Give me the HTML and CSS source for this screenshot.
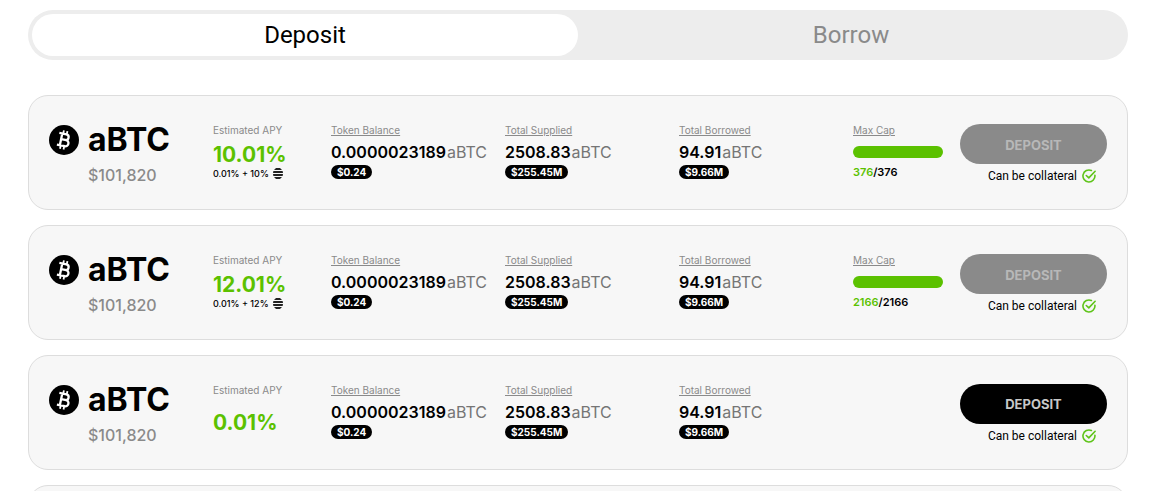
FILE: index.html
```
<!DOCTYPE html>
<html lang="en">
<head>
<meta charset="utf-8">
<title>Markets</title>
<link rel="stylesheet" href="styles.css">
</head>
<body>
<svg class="sprite" aria-hidden="true">
  <symbol id="btc" viewBox="0 0 30 30">
    <circle cx="15" cy="15" r="15" fill="#000"/>
    <g transform="rotate(12 15 15)" fill="none" stroke="#fff" stroke-width="2.3">
      <path d="M9 9.1h7.2a2.8 2.8 0 0 1 0 5.6h-4.4M16.2 14.7h.8a3.1 3.1 0 0 1 0 6.2H9M12 9.1v11.8"/>
      <path d="M12.9 5.6v3.4M16.5 5.6v3.4M12.9 21v3.4M16.5 21v3.4" stroke-width="1.8"/>
    </g>
  </symbol>
  <symbol id="globe" viewBox="0 0 10 11">
    <path d="M3 0h4l2 2H1z" fill="#222"/>
    <path d="M.4 3h9.2l.4 2H0z" fill="#222"/>
    <path d="M0 6h10l-.4 2H.4z" fill="#222"/>
    <path d="M1 9h8l-2 2H3z" fill="#222"/>
  </symbol>
  <symbol id="check" viewBox="0 0 14 14">
    <path d="M12.9 6.2A6 6 0 1 1 9.4 1.5M4.3 6.5l2.5 2.4 6.3-6.6" fill="none" stroke="#5fc41a" stroke-width="1.6" stroke-linecap="round" stroke-linejoin="round"/>
  </symbol>
</svg>
<main class="page">
  <div class="tabs" role="tablist">
    <button class="tab tab-active" role="tab" aria-selected="true">Deposit</button>
    <button class="tab" role="tab" aria-selected="false">Borrow</button>
  </div>
  <div class="markets">
    <article class="card">
      <div class="asset"><svg class="coin"><use href="#btc"/></svg><h2 class="name">aBTC</h2><p class="price">$101,820</p></div>
      <div class="cell"><span class="label plain">Estimated APY</span><strong class="apy">10.01%</strong><span class="split">0.01% + 10% <svg class="globe"><use href="#globe"/></svg></span></div>
      <div class="cell"><span class="label">Token Balance</span><p class="amount"><strong>0.0000023189</strong><span class="unit">aBTC</span></p><span class="pill">$0.24</span></div>
      <div class="cell"><span class="label">Total Supplied</span><p class="amount"><strong>2508.83</strong><span class="unit">aBTC</span></p><span class="pill">$255.45M</span></div>
      <div class="cell"><span class="label">Total Borrowed</span><p class="amount"><strong>94.91</strong><span class="unit">aBTC</span></p><span class="pill">$9.66M</span></div>
      <div class="cell"><span class="label">Max Cap</span><div class="bar"></div><p class="cap"><span class="used">376</span>/376</p></div>
      <div class="action"><button class="deposit" disabled>DEPOSIT</button><p class="collateral">Can be collateral <svg class="check"><use href="#check"/></svg></p></div>
    </article>
    <article class="card">
      <div class="asset"><svg class="coin"><use href="#btc"/></svg><h2 class="name">aBTC</h2><p class="price">$101,820</p></div>
      <div class="cell"><span class="label plain">Estimated APY</span><strong class="apy">12.01%</strong><span class="split">0.01% + 12% <svg class="globe"><use href="#globe"/></svg></span></div>
      <div class="cell"><span class="label">Token Balance</span><p class="amount"><strong>0.0000023189</strong><span class="unit">aBTC</span></p><span class="pill">$0.24</span></div>
      <div class="cell"><span class="label">Total Supplied</span><p class="amount"><strong>2508.83</strong><span class="unit">aBTC</span></p><span class="pill">$255.45M</span></div>
      <div class="cell"><span class="label">Total Borrowed</span><p class="amount"><strong>94.91</strong><span class="unit">aBTC</span></p><span class="pill">$9.66M</span></div>
      <div class="cell"><span class="label">Max Cap</span><div class="bar"></div><p class="cap"><span class="used">2166</span>/2166</p></div>
      <div class="action"><button class="deposit" disabled>DEPOSIT</button><p class="collateral">Can be collateral <svg class="check"><use href="#check"/></svg></p></div>
    </article>
    <article class="card">
      <div class="asset"><svg class="coin"><use href="#btc"/></svg><h2 class="name">aBTC</h2><p class="price">$101,820</p></div>
      <div class="cell"><span class="label plain">Estimated APY</span><strong class="apy apy-single">0.01%</strong></div>
      <div class="cell"><span class="label">Token Balance</span><p class="amount"><strong>0.0000023189</strong><span class="unit">aBTC</span></p><span class="pill">$0.24</span></div>
      <div class="cell"><span class="label">Total Supplied</span><p class="amount"><strong>2508.83</strong><span class="unit">aBTC</span></p><span class="pill">$255.45M</span></div>
      <div class="cell"><span class="label">Total Borrowed</span><p class="amount"><strong>94.91</strong><span class="unit">aBTC</span></p><span class="pill">$9.66M</span></div>
      <div class="cell"></div>
      <div class="action"><button class="deposit">DEPOSIT</button><p class="collateral">Can be collateral <svg class="check"><use href="#check"/></svg></p></div>
    </article>
    <article class="card"></article>
  </div>
</main>
</body>
</html>
```
FILE: styles.css
```
* { box-sizing: border-box; }

body {
  margin: 0;
  background: #fff;
  color: #000;
  font-family: Inter, "Liberation Sans", sans-serif;
}

p, h2 { margin: 0; }
button { border: 0; font-family: inherit; cursor: pointer; }
.sprite { display: none; }

.page {
  height: 100vh;
  overflow: hidden;
  padding: 10px 39px 0 28px;
}

.tabs {
  display: grid;
  grid-template-columns: 1fr 1fr;
  padding: 4px;
  border-radius: 25px;
  background: #ededed;
}

.tab {
  height: 42px;
  border-radius: 21px;
  background: transparent;
  color: #8a8a8a;
  font-family: Roboto, sans-serif;
  font-size: 24px;
}

.tab-active { background: #fff; color: #000; }

.markets {
  display: flex;
  flex-direction: column;
  gap: 15px;
  margin-top: 35px;
}

.card {
  display: grid;
  grid-template-columns: 164fr 118fr 174fr 174fr 174fr 107fr 147fr;
  flex-shrink: 0;
  min-height: 115px;
  padding: 28px 20px 20px;
  border: 1px solid #ddd;
  border-radius: 20px;
  background: #f7f7f7;
}

.asset {
  display: grid;
  grid-template-columns: 30px 1fr;
  grid-template-rows: 32px 20px;
  column-gap: 9px;
  row-gap: 9px;
  align-items: center;
  align-content: start;
}

.coin { width: 30px; height: 30px; }
.name { font-size: 32px; line-height: 32px; font-weight: 700; }

.price {
  grid-column: 2;
  color: #8a8a8a;
  font-size: 16px;
  line-height: 20px;
  font-weight: 500;
}

.cell {
  display: flex;
  flex-direction: column;
  align-items: flex-start;
  min-width: 0;
  white-space: nowrap;
}

.label {
  color: #8a8a8a;
  font-size: 10px;
  line-height: 12px;
  text-decoration: underline;
}

.plain { text-decoration: none; }

.apy {
  margin-top: 7px;
  color: #5bc100;
  font-size: 21px;
  line-height: 24px;
  font-weight: 700;
}

.apy-single { margin-top: 15px; }

.split {
  display: flex;
  align-items: center;
  gap: 4px;
  font-size: 9px;
  line-height: 13px;
  font-weight: 500;
}

.globe { width: 10px; height: 11px; }

.amount {
  display: flex;
  gap: 1px;
  margin-top: 6px;
  font-size: 16px;
  line-height: 20px;
}

.amount strong { font-weight: 600; }
.unit { color: #757575; }

.pill {
  margin-top: 3px;
  padding: 0 6px;
  border-radius: 7px;
  background: #000;
  color: #fff;
  font-size: 10px;
  line-height: 14px;
  font-weight: 700;
}

.bar {
  width: 90px;
  height: 12px;
  margin-top: 10px;
  border-radius: 6px;
  background: #5bc100;
}

.cap {
  margin-top: 7px;
  font-size: 11px;
  line-height: 14px;
  font-weight: 600;
}

.used { color: #5bc100; }

.deposit {
  width: 100%;
  height: 40px;
  border-radius: 20px;
  background: #000;
  color: #c8c8c8;
  font-size: 13px;
  font-weight: 700;
}

.deposit:disabled { padding-top: 3px; background: #8a8a8a; color: #b8b8b8; cursor: default; }

.collateral {
  display: flex;
  align-items: center;
  justify-content: flex-end;
  gap: 5px;
  margin-top: 4px;
  padding-right: 11px;
  font-family: Roboto, sans-serif;
  font-size: 12px;
  line-height: 16px;
}

.check { width: 14px; height: 14px; }
```
